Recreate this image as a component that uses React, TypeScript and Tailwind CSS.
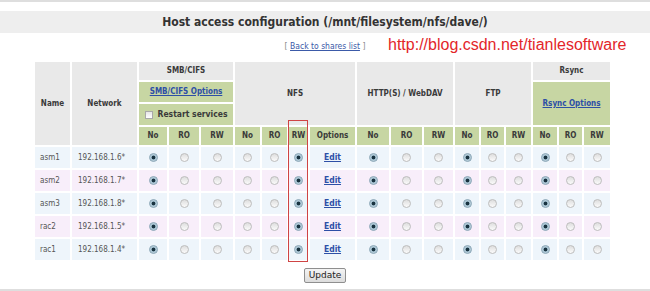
import React from "react";

function Radio({ on }: { on: boolean }) {
  return on ? (
    <span className="inline-block align-middle w-[9px] h-[9px] rounded-full border border-[#86a3b4] bg-[radial-gradient(circle,#18323f_0,#18323f_30%,#9fbccc_45%,#e4eef4_100%)]" />
  ) : (
    <span className="inline-block align-middle w-[9px] h-[9px] rounded-full border border-[#bdbdbd] bg-[linear-gradient(#dedede,#fbfbfb)]" />
  );
}

const widths = [
  "w-[35px]", "w-[65px]", "w-[28px]", "w-[30px]", "w-[32px]", "w-[25px]", "w-[25px]", "w-[19px]", "w-[45px]",
  "w-[32px]", "w-[31px]", "w-[29px]", "w-[24px]", "w-[23px]", "w-[25px]", "w-[24px]", "w-[23px]", "w-[26px]",
];

const rows = [
  { name: "asm1", ip: "192.168.1.6*", bg: "bg-[#eef5fb]" },
  { name: "asm2", ip: "192.168.1.7*", bg: "bg-[#f8eefa]" },
  { name: "asm3", ip: "192.168.1.8*", bg: "bg-[#eef5fb]" },
  { name: "rac2", ip: "192.168.1.5*", bg: "bg-[#f8eefa]" },
  { name: "rac1", ip: "192.168.1.4*", bg: "bg-[#eef5fb]" },
];

const gray = "bg-[#e9e9e9]";
const green = "bg-[#c7d6a3]";
const link = "text-[#2d4fa6] underline font-bold";

export default function App() {
  const groups: { sel: number; n: number; opt?: boolean }[] = [
    { sel: 0, n: 3 },
    { sel: 2, n: 3, opt: true },
    { sel: 0, n: 3 },
    { sel: 0, n: 3 },
    { sel: 0, n: 3 },
  ];
  return (
    <div className="relative w-[650px] h-[291px] bg-white overflow-hidden font-['DejaVu_Sans_Condensed','DejaVu_Sans',sans-serif] text-[#3a3a3a]">
      <div className="h-[2px] bg-[#dedede]" />
      <div className="mt-[9px] h-[22px] bg-[#eeeeee] flex items-center justify-center text-[12px] font-bold text-[#333]">
        Host access configuration (/mnt/filesystem/nfs/dave/)
      </div>
      <div className="h-[27px] flex items-center justify-center text-[8.5px] text-[#888]">
        <span>[&nbsp;</span>
        <a className="text-[#3b5aa8] underline">Back to shares list</a>
        <span>&nbsp;]</span>
      </div>
      <div className="pl-[33px]">
        <table className="table-fixed w-[579px] border-separate border-spacing-[2px] text-[8px] text-center">
          <colgroup>
            {widths.map((w, i) => (
              <col key={i} className={w} />
            ))}
          </colgroup>
          <tbody>
            <tr className="h-[18px] font-bold">
              <td rowSpan={4} className={`${gray} p-0`}>Name</td>
              <td rowSpan={4} className={`${gray} p-0`}>Network</td>
              <td colSpan={3} className={`${gray} p-0`}>SMB/CIFS</td>
              <td colSpan={4} rowSpan={3} className={`${gray} p-0`}>NFS</td>
              <td colSpan={3} rowSpan={3} className={`${gray} p-0`}>HTTP(S) / WebDAV</td>
              <td colSpan={3} rowSpan={3} className={`${gray} p-0`}>FTP</td>
              <td colSpan={3} className={`${gray} p-0`}>Rsync</td>
            </tr>
            <tr className="h-[20px] font-bold">
              <td colSpan={3} className={`${green} p-0`}>
                <a className={link}>SMB/CIFS Options</a>
              </td>
              <td colSpan={3} rowSpan={2} className={`${green} p-0`}>
                <a className={link}>Rsync Options</a>
              </td>
            </tr>
            <tr className="h-[21px] font-bold">
              <td colSpan={3} className={`${green} p-0`}>
                <div className="flex items-center justify-center gap-[5px]">
                  <span className="inline-block w-[8px] h-[8px] border border-[#a8a8a8] bg-[linear-gradient(#e6e6e6,#ffffff)]" />
                  <span className="text-[8.5px]">Restart services</span>
                </div>
              </td>
            </tr>
            <tr className="h-[18px] font-bold">
              {groups.map((g, gi) => (
                <React.Fragment key={gi}>
                  <td className={`${green} p-0`}>No</td>
                  <td className={`${green} p-0`}>RO</td>
                  <td className={`${green} p-0`}>RW</td>
                  {g.opt && <td className={`${green} p-0`}>Options</td>}
                </React.Fragment>
              ))}
            </tr>
            {rows.map((r) => (
              <tr key={r.name} className="h-[21px] text-[#555]">
                <td className={`${r.bg} p-0 pl-[5px] text-left`}>{r.name}</td>
                <td className={`${r.bg} p-0 pl-[6px] text-left`}>{r.ip}</td>
                {groups.map((g, gi) => (
                  <React.Fragment key={gi}>
                    {[0, 1, 2].map((k) => (
                      <td key={k} className={`${r.bg} p-0`}>
                        <Radio on={k === g.sel} />
                      </td>
                    ))}
                    {g.opt && (
                      <td className={`${r.bg} p-0`}>
                        <a className={`${link} text-[8.5px]`}>Edit</a>
                      </td>
                    )}
                  </React.Fragment>
                ))}
              </tr>
            ))}
          </tbody>
        </table>
      </div>
      <div className="mt-[6px] flex justify-center">
        <button className="h-[15px] px-[4px] border border-[#8f8f8f] rounded-[2px] bg-[linear-gradient(#f4f4f4,#dcdcdc)] text-[9px] leading-none text-[#222] font-['DejaVu_Sans',sans-serif]">
          Update
        </button>
      </div>
      <div className="absolute left-0 right-0 bottom-0 h-[2px] bg-[#dedede]" />
      <div className="absolute left-[288px] top-[120px] w-[20px] h-[142px] border border-[#cf4444]" />
      <div className="absolute left-[388px] top-[35px] text-[16px] leading-[20px] text-[#e3262a] font-['Liberation_Sans',Arial,sans-serif]">
        http://blog.csdn.net/tianlesoftware
      </div>
    </div>
  );
}
